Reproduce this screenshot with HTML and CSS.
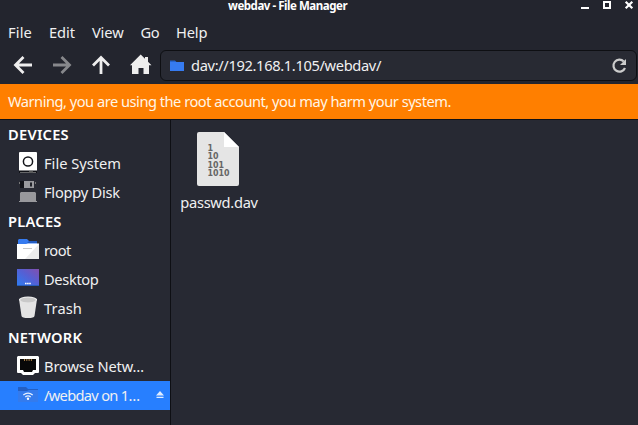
FILE: index.html
```
<!DOCTYPE html>
<html lang="en">
<head>
<meta charset="utf-8">
<title>webdav - File Manager</title>
<link rel="stylesheet" href="styles.css">
</head>
<body>
<div class="window">
  <header class="titlebar">
    <span class="title">webdav - File Manager</span>
    <svg class="controls" width="54" height="12" viewBox="0 0 54 12">
      <path d="M0 7h8v2H0z" fill="#fff"/>
      <path d="M23 2h6v6h-6z" fill="none" stroke="#fff" stroke-width="2"/>
      <path d="M44.700 1.700l6.600 6.600M51.300 1.700l-6.600 6.600" stroke="#fff" stroke-width="2.200"/>
    </svg>
  </header>
  <nav class="menubar"><span class="m-file">File</span><span class="m-edit">Edit</span><span class="m-view">View</span><span class="m-go">Go</span><span class="m-help">Help</span></nav>
  <div class="toolbar">
    <svg class="nav" width="160" height="39" viewBox="0 0 160 39" fill="none" stroke="#eee" stroke-width="2.800">
      <path d="M32 20H15.500M23.500 12l-8 8 8 8"/>
      <path d="M53 20h16.500M61.500 12l8 8-8 8" stroke="#87888c"/>
      <path d="M101 29V12.500M93 20.500l8-8 8 8"/>
      <path d="M130 20.300L140.700 9.500l4.300 4.200V12h3v4.700l3.500 3.600h-2.500V29h-5.500v-6h-5v6H132v-8.700z" fill="#eee" stroke="none"/>
    </svg>
    <div class="address">
      <svg width="16" height="14" viewBox="0 0 16 14"><path d="M1 3V1.500h5L7.500 3H15v9H1z" fill="#2563cc"/><path d="M1 3h14v9H1z" fill="#367bf0"/></svg>
      <span class="url">dav://192.168.1.105/webdav/</span>
      <svg class="reload" width="18" height="18" viewBox="0 0 18 18"><path d="M13.800 4.500A6 6 0 1 0 15 11" fill="none" stroke="#ccc" stroke-width="2.200"/><path d="M16 2V8H10z" fill="#ccc"/></svg>
    </div>
  </div>
  <div class="warning"><span>Warning, you are using the root account, you may harm your system.</span></div>
  <div class="content">
    <aside class="sidebar">
      <h2 class="devices">DEVICES</h2>
      <div class="row"><svg class="icon" width="24" height="24" viewBox="0 0 24 24"><rect x="3" y="1" width="18" height="21" rx="1" fill="#fff"/><path d="M3 19.500h18V22H3z" fill="#111217"/><path d="M4 21.500h16v.5H4z" fill="#bbb"/><path d="M13 20h4v1.500h-4z" fill="#555"/><circle cx="12" cy="10.500" r="4.600" fill="none" stroke="#14151a" stroke-width="1.500"/></svg><span class="fs">File System</span></div>
      <div class="row"><svg class="icon" width="24" height="24" viewBox="0 0 24 24"><path d="M3 1h17l1 1v20H3z" fill="#292b34"/><path d="M4 1h4v7H4z" fill="#121318"/><path d="M8 1h10v7H8z" fill="#99999d"/><path d="M14 2.500h2v4h-2z" fill="#202229"/><path d="M3 2h1v2H3zM19 2h1v2h-1z" fill="#777"/><path d="M5 12h14l1 1v8h1v1H3v-1h1v-8z" fill="#98989c"/></svg><span class="fd">Floppy Disk</span></div>
      <h2 class="places">PLACES</h2>
      <div class="row"><svg class="icon" width="24" height="24" viewBox="0 0 24 24"><path d="M2 2l1-1h8l2 2h8v4H2z" fill="#367bf0"/><path d="M13 3h8v2H11z" fill="#225bc0"/><path d="M1 6h9l2-.500h11V21H1z" fill="#fff"/><path d="M23 6v15H9z" fill="#ececec"/><path d="M7 10.500h9" stroke="#c7c7c7"/></svg><span class="root">root</span></div>
      <div class="row"><svg class="icon" width="24" height="24" viewBox="0 0 24 24"><defs><linearGradient id="desk" x1="0" y1="1" x2="1" y2="0"><stop offset="0" stop-color="#2c7df2"/><stop offset=".55" stop-color="#565fd3"/><stop offset="1" stop-color="#824fae"/></linearGradient></defs><path d="M1 2h22v17H1z" fill="url(#desk)"/><path d="M1 18h22v1H1z" fill="#275bb8"/><path d="M9 16.500h6" stroke="#fff" stroke-width="1.500" stroke-dasharray="1.600 .5"/></svg><span class="desktop">Desktop</span></div>
      <div class="row"><svg class="icon" width="24" height="24" viewBox="0 0 24 24"><path d="M3 3l2.500 17q.5 2 6.500 2t6.500-2L21 3z" fill="#e4e4e4"/><ellipse cx="12" cy="3.500" rx="9" ry="3" fill="#eee"/><ellipse cx="12" cy="3.900" rx="7.800" ry="2.500" fill="#c9c9c9"/></svg><span class="trash">Trash</span></div>
      <h2 class="network">NETWORK</h2>
      <div class="row"><svg class="icon" width="24" height="24" viewBox="0 0 24 24"><path d="M2 2h20l1 1v15q0 1-1 1h-3l-2 2H7l-2-2H2q-1 0-1-1V3z" fill="#fff"/><path d="M4 5h16v11h-3l-1 2H8l-1-2H4z" fill="#080808"/><path d="M8.500 5v2m2.300-2v2m2.300-2v2m2.300-2v2" stroke="#a57b43"/></svg><span class="browse">Browse Netw…</span></div>
      <div class="row selected"><svg class="icon" width="24" height="24" viewBox="0 0 24 24"><path d="M2 6V4h8l2 2h10v3H2z" fill="#235fc4"/><path d="M2 8h9l2-1h9v12H2z" fill="#347bed"/><path d="M7.300 12Q12 8.200 16.700 12M9.300 14Q12 11.700 14.700 14" fill="none" stroke="#e5efff" stroke-width="1.300"/><circle cx="12" cy="15.700" r="1.200" fill="#fff"/></svg><span class="webdav">/webdav on 1…</span><svg class="eject" width="8" height="8" viewBox="0 0 8 8"><path d="M4 0l4 4.500H0zM.500 5.700h7V7h-7z" fill="#e0ecff"/></svg></div>
    </aside>
    <main class="files">
      <figure class="file">
        <svg width="42" height="54" viewBox="0 0 42 54"><path d="M2 0h25l15 15v37q0 2-2 2H2q-2 0-2-2V2q0-2 2-2z" fill="#e5e5e5"/><path d="M27 0l15 15H27z" fill="#fff"/><g class="digits"><text x="10.500" y="18.500">1</text><text x="10.500" y="26.500" textLength="11" lengthAdjust="spacingAndGlyphs">10</text><text x="10.500" y="36" textLength="16.500" lengthAdjust="spacingAndGlyphs">101</text><text x="10.500" y="44" textLength="22" lengthAdjust="spacingAndGlyphs">1010</text></g></svg>
        <figcaption><span class="filename">passwd.dav</span></figcaption>
      </figure>
    </main>
  </div>
</div>
</body>
</html>
```
FILE: styles.css
```
* { box-sizing: border-box; }
body { margin: 0; background: #23252e; color: #f0f0f1; font: 14.67px/20px "Noto Sans", sans-serif; }
svg { display: block; flex: none; }
span { white-space: nowrap; }
.window { width: 638px; height: 425px; overflow: hidden; display: flex; flex-direction: column; }
.titlebar { height: 18px; display: flex; justify-content: flex-end; }
.title { margin: 0 auto 0 228px; font-size: 11.5px; line-height: 11px; letter-spacing: -.46px; font-weight: 700; color: #fff; }
.controls { margin-right: 3px; }
.menubar { height: 27px; padding: 4px 8px 0; display: flex; gap: 17px; }
.m-file { letter-spacing: .15px; }
.m-edit { letter-spacing: -.1px; }
.m-view { letter-spacing: -.1px; }
.m-go { letter-spacing: -.5px; }
.m-help { letter-spacing: -.2px; }
.toolbar { height: 39px; display: flex; padding-right: 1px; }
.address { flex: 1; height: 31px; margin-top: 5px; border: 1px solid #0e0f13; border-radius: 6px; background: #282a33; display: flex; align-items: center; padding: 0 8px; }
.url { margin: -2px 0 0 6px; letter-spacing: -.35px; }
.reload { margin-left: auto; }
.warning { height: 36px; background: #ff7f00; border-bottom: 1px solid #101116; color: #fff5e6; padding: 7px 8px; letter-spacing: -.5px; }
.content { flex: 1; display: flex; background: #272933; }
.sidebar { width: 171px; border-right: 1px solid #0e0f14; }
h2 { margin: 0; height: 29px; padding-left: 8px; font-size: 14.67px; font-weight: 600; line-height: 28px; letter-spacing: .25px; color: #fff; }
.row { height: 29px; display: flex; align-items: center; padding: 0 0 1px 16px; }
.row span { margin: -1px 0 0 4px; }
.fd { letter-spacing: -.25px; }
.root { letter-spacing: -.5px; }
.desktop { letter-spacing: -.35px; }
.trash { letter-spacing: .1px; }
.browse { letter-spacing: -.15px; }
.webdav { letter-spacing: -.7px; }
.selected { background: #277fff; }
.eject { margin: 0 6px 0 auto; }
.file { margin: 12px 0 0; width: 96px; display: flex; flex-direction: column; align-items: center; }
.file svg { margin-left: -3px; }
figcaption { margin-top: 6px; letter-spacing: -.3px; }
.digits { font: 700 8px "DejaVu Sans", sans-serif; fill: #666; }
```
